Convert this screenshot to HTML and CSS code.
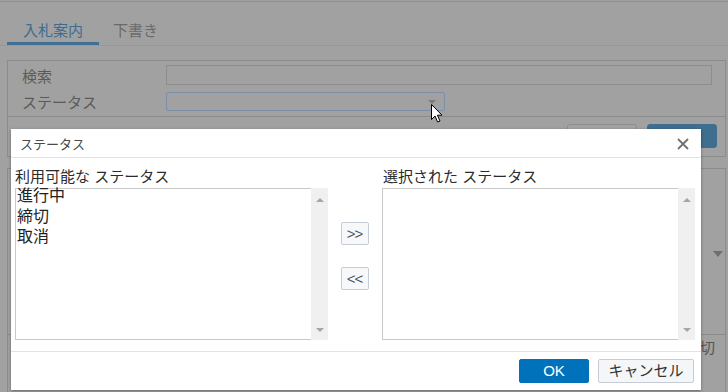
FILE: index.html
```html
<!DOCTYPE html>
<html lang="ja">
<head>
<meta charset="utf-8">
<title>入札案内</title>
<link rel="stylesheet" href="styles.css">
</head>
<body>
<div class="page">
  <nav class="tabs">
    <a class="tab active">入札案内</a>
    <a class="tab">下書き</a>
  </nav>

  <section class="search-panel">
    <div class="fields">
      <div class="field-row">
        <span class="field-label">検索</span>
        <div class="input wide"></div>
      </div>
      <div class="field-row">
        <span class="field-label">ステータス</span>
        <div class="input select"><span class="caret"></span></div>
      </div>
    </div>
    <div class="actions">
      <button class="btn-ghost">クリア</button>
      <button class="btn-primary">検索</button>
    </div>
  </section>

  <section class="results">
    <div class="results-head">
      <span class="sort-caret"></span>
    </div>
    <div class="results-row">
      <span class="cell">締切</span>
    </div>
  </section>
</div>

<svg class="cursor" width="14" height="21" viewBox="0 0 14 21" aria-hidden="true">
  <path d="M1.5 1.5 L1.5 16.5 L5 13 L7.6 19 L10 18 L7.4 12.2 L12 12.2 Z" fill="#fff" stroke="#000" stroke-width="1" stroke-linejoin="miter"/>
</svg>

<div class="modal" role="dialog">
  <header class="modal-header">
    <span class="modal-title">ステータス</span>
    <svg class="close" width="12" height="12" viewBox="0 0 12 12" aria-hidden="true">
      <path d="M1 1 L11 11 M11 1 L1 11" stroke="#707070" stroke-width="1.8" fill="none"/>
    </svg>
  </header>
  <div class="modal-body">
    <div class="list-col">
      <div class="list-label">利用可能な ステータス</div>
      <div class="listbox">
        <ul class="items">
          <li>進行中</li>
          <li>締切</li>
          <li>取消</li>
        </ul>
        <div class="scrollbar"><span class="arrow up"></span><span class="arrow down"></span></div>
      </div>
    </div>
    <div class="move-col">
      <button class="move-btn">&gt;&gt;</button>
      <button class="move-btn">&lt;&lt;</button>
    </div>
    <div class="list-col right">
      <div class="list-label">選択された ステータス</div>
      <div class="listbox">
        <ul class="items"></ul>
        <div class="scrollbar"><span class="arrow up"></span><span class="arrow down"></span></div>
      </div>
    </div>
  </div>
  <footer class="modal-footer">
    <button class="btn-ok">OK</button>
    <button class="btn-cancel">キャンセル</button>
  </footer>
</div>
</body>
</html>
```

FILE: styles.css
```css
* { box-sizing: border-box; }

html, body {
  margin: 0;
  padding: 0;
  width: 728px;
  height: 392px;
  overflow: hidden;
  background: #a1a1a1;
  font-family: "Noto Sans CJK JP", "Noto Sans", sans-serif;
}

button {
  font-family: inherit;
  margin: 0;
  padding: 0;
  cursor: default;
}

/* ---------- background page (dimmed) ---------- */
.page {
  margin-top: 1px;
  border-top: 1px solid #8f8f8f;
  height: 391px;
  display: flex;
  flex-direction: column;
}

.tabs {
  display: flex;
  padding-left: 7px;
  border-bottom: 1px solid #979797;
}

.tab {
  padding: 18px 16px 2px;
  font-size: 15px;
  line-height: 20px;
  color: #6a6a6a;
  border-bottom: 3px solid transparent;
}

.tab.active {
  color: #3b6d92;
  border-bottom-color: #3f6f92;
}

.tab + .tab { padding-left: 14px; }

.search-panel {
  margin: 14px 2px 0 7px;
  border: 1px solid #8c8c8c;
}

.fields {
  padding: 4px 13px 5px 14px;
  display: flex;
  flex-direction: column;
  gap: 7px;
  border-bottom: 1px solid #8c8c8c;
}

.field-row {
  display: flex;
  align-items: center;
}

.field-label {
  width: 144px;
  font-size: 15px;
  line-height: 19px;
  color: #5a5a5a;
}

.input {
  height: 20px;
  border: 1px solid #8d8d8d;
  background: #a1a1a1;
}

.input.wide { flex: 1; }

.input.select {
  width: 279px;
  height: 19px;
  border-color: #7d8fa8;
  border-radius: 2px;
  display: flex;
  justify-content: flex-end;
  align-items: center;
  padding-right: 8px;
}

.caret {
  width: 0;
  height: 0;
  border-left: 4px solid transparent;
  border-right: 4px solid transparent;
  border-top: 4px solid #7a7a7a;
}

.actions {
  display: flex;
  justify-content: flex-end;
  gap: 10px;
  padding: 7px 8px 8px;
}

.btn-ghost, .btn-primary {
  width: 70px;
  height: 24px;
  font-size: 14px;
  border-radius: 3px;
}

.btn-ghost {
  background: #a3a3a3;
  border: 1px solid #8e8e8e;
  color: #555;
}

.btn-primary {
  background: #3f6e8f;
  border: 1px solid #3f6e8f;
  color: #a9bccb;
}

.results {
  margin: 11px 2px 0 7px;
  border: 1px solid #8c8c8c;
  border-bottom: none;
  flex: 1;
  display: flex;
  flex-direction: column;
}

.results-head {
  height: 165px;
  display: flex;
  justify-content: flex-end;
  align-items: flex-start;
  padding: 82px 2px 0 0;
}

.sort-caret {
  width: 0;
  height: 0;
  border-left: 5px solid transparent;
  border-right: 5px solid transparent;
  border-top: 6px solid #6f6f6f;
}

.results-row {
  border-top: 1px solid #8c8c8c;
  display: flex;
  justify-content: flex-end;
  padding: 2px 10px 0 0;
}

.cell {
  font-size: 15px;
  line-height: 20px;
  color: #555;
}

.cursor {
  position: absolute;
  left: 430px;
  top: 103px;
}

/* ---------- modal ---------- */
.modal {
  position: absolute;
  left: 11px;
  top: 129px;
  width: 690px;
  height: 261px;
  background: #fff;
  box-shadow: 0 1px 3px rgba(0, 0, 0, 0.35);
  display: flex;
  flex-direction: column;
  font-family: "Liberation Sans", "Noto Sans CJK JP", sans-serif;
}

.modal-header {
  height: 29px;
  border-bottom: 1px solid #e3e3e3;
  display: flex;
  align-items: center;
  justify-content: space-between;
  padding: 0 12px 0 9px;
}

.modal-title {
  font-size: 13px;
  color: #4a4a4a;
}

.close { display: block; margin-top: 2px; }

.modal-body {
  height: 194px;
  border-bottom: 1px solid #e3e3e3;
  padding: 8px 6px 0 4px;
  display: flex;
}

.list-col {
  width: 313px;
  display: flex;
  flex-direction: column;
}

.list-col.right .list-label { padding-left: 1px; }

.list-label {
  height: 22px;
  font-size: 15px;
  line-height: 22px;
  color: #2b2b2b;
  white-space: nowrap;
}

.listbox {
  height: 152px;
  border: 1px solid #c9c9c9;
  border-right: none;
  display: flex;
}

.items {
  list-style: none;
  margin: 0;
  padding: 0 0 0 1px;
  flex: 1;
}

.items li {
  height: 20.5px;
  font-size: 16px;
  line-height: 14px;
  color: #222;
}

.scrollbar {
  width: 17px;
  background: #f0f0f0;
  margin: -1px 0;
  display: flex;
  flex-direction: column;
  justify-content: space-between;
  align-items: center;
  padding: 10px 0 8px;
}

.arrow {
  width: 0;
  height: 0;
  border-left: 4px solid transparent;
  border-right: 4px solid transparent;
}

.arrow.up { border-bottom: 4px solid #a6a6a6; }
.arrow.down { border-top: 4px solid #a6a6a6; }

.move-col {
  width: 54px;
  display: flex;
  flex-direction: column;
  align-items: center;
  gap: 22px;
  padding-top: 56px;
}

.move-btn {
  width: 28px;
  height: 23px;
  border: 1px solid #c6ccd6;
  border-radius: 2px;
  background: #f7f8fa;
  color: #50555f;
  font-family: "Liberation Sans", sans-serif;
  font-size: 15px;
  letter-spacing: -1px;
  line-height: 20px;
  padding-right: 1px;
}

.modal-footer {
  flex: 1;
  display: flex;
  justify-content: flex-end;
  gap: 9px;
  padding: 7px 7px 0 0;
}

.btn-ok, .btn-cancel {
  height: 24px;
  font-size: 15px;
  line-height: 22px;
  border-radius: 2px;
}

.btn-ok {
  width: 70px;
  background: #0072bb;
  border: 1px solid #0072bb;
  color: #fff;
}

.btn-cancel {
  width: 96px;
  background: #f4f6f8;
  border: 1px solid #c5ccd5;
  color: #333;
}
```
